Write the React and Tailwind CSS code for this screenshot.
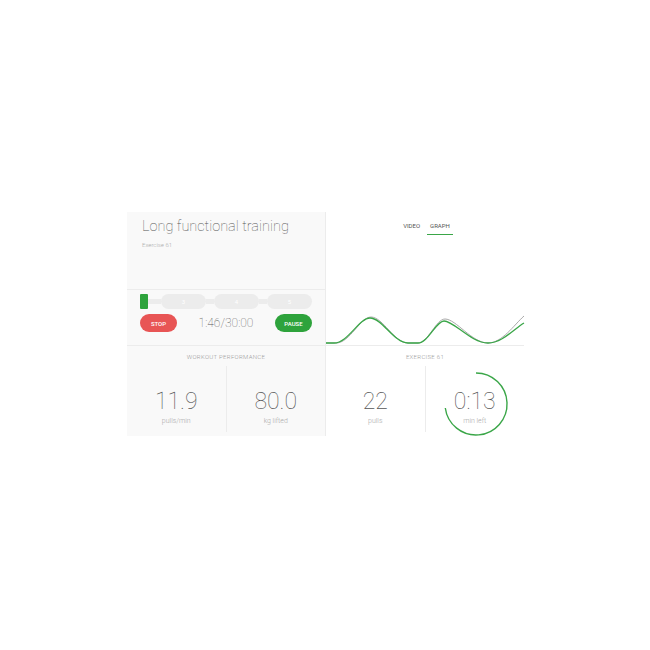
export default function App() {
  const steps = ["3", "4", "5"];

  return (
    <div className="w-[650px] h-[650px] bg-white font-['Roboto','Liberation_Sans',sans-serif] pt-[212px] pl-[127px]">
      <div className="flex w-[397px] h-[224px]">
        {/* Left panel */}
        <div className="w-[198px] flex flex-col bg-[#f9f9f9]">
          <div className="h-[78px] px-[15px] pt-[5px] border-b border-[#ececec]">
            <h1 className="text-[14.5px] font-thin text-[#555] leading-[20px]">Long functional training</h1>
            <p className="text-[6px] font-light text-[#aaa] mt-[3px]">Exercise 61</p>
          </div>

          <div className="h-[56px] px-[13px] pt-[4px] border-b border-[#ececec]">
            <div className="flex items-center h-[15px]">
              <div className="w-[10px] h-[15px] bg-[#2ea33c] rounded-[1px]" />
              {steps.map((s, i) => (
                <div key={s} className="flex items-center">
                  <div className={`h-[5px] bg-[#ececec] ${i === 0 ? "w-[13px]" : "w-[8px]"}`} />
                  <div className="w-[45px] h-[15px] rounded-full bg-[#ececec] flex items-center justify-center text-[6px] text-white">
                    {s}
                  </div>
                </div>
              ))}
            </div>
            <div className="flex items-center justify-between mt-[5px]">
              <button className="w-[37px] h-[18px] rounded-full bg-[#e85555] text-white text-[6px] font-medium">STOP</button>
              <span className="text-[12px] font-thin text-[#555]">1:46/30:00</span>
              <button className="w-[37px] h-[18px] rounded-full bg-[#2ea33c] text-white text-[6px] font-medium">PAUSE</button>
            </div>
          </div>

          <div className="flex-1 flex flex-col">
            <p className="h-[20px] flex items-center justify-center text-[6px] font-light tracking-[0.3px] text-[#999]">WORKOUT PERFORMANCE</p>
            <div className="flex h-[66px]">
              <Stat value="11.9" label="pulls/min" />
              <div className="w-px bg-[#ececec]" />
              <Stat value="80.0" label="kg lifted" />
            </div>
          </div>
        </div>

        {/* Right panel */}
        <div className="w-[199px] flex flex-col border-l border-[#ececec] bg-white">
          <div className="h-[134px] flex flex-col border-b border-[#ececec]">
            <div className="flex justify-center gap-[7px] pt-[9px] pl-[6px] text-[6px] text-[#555]">
              <span className="pb-[4px]">VIDEO</span>
              <span className="pb-[4px] px-[3px] border-b border-[#3aa648]">GRAPH</span>
            </div>
            <svg className="mt-auto" width="199" height="32" viewBox="0 0 199 32" fill="none">
              <path
                d="M0 30 L10 30 C24 30 34 4 45 4 C57 4 68 30 82 30 L92 30 C102 30 110 6 119 6 C130 6 146 30 162 30 C176 30 188 12 198 3"
                stroke="#a9a9a9"
                strokeWidth="1"
              />
              <path
                d="M0 30 L8 30 C22 30 33 5 44 5 C56 5 68 30 82 30 L92 30 C102 30 110 8 118 8 C128 8 145 30 162 30 C176 30 188 16 198 10"
                stroke="#3aa648"
                strokeWidth="1.3"
              />
            </svg>
          </div>
          <div className="flex-1 flex flex-col">
            <p className="h-[20px] flex items-center justify-center text-[6px] font-light tracking-[0.3px] text-[#999]">EXERCISE 61</p>
            <div className="flex h-[66px]">
              <Stat value="22" label="pulls" />
              <div className="w-px bg-[#ececec]" />
              <div className="flex-1 relative flex flex-col items-center pt-[24px]">
                <svg className="absolute left-[17px] top-[5px]" width="66" height="66" viewBox="0 0 66 66" fill="none">
                  <path d="M33 2 A31 31 0 1 1 2.3 37" stroke="#3aa648" strokeWidth="1.4" />
                </svg>
                <span className="text-[23px] font-thin text-[#555] leading-[24px]">0:13</span>
                <span className="text-[7px] font-light text-[#aaa] mt-[2px]">min left</span>
              </div>
            </div>
          </div>
        </div>
      </div>
    </div>
  );
}

function Stat({ value, label }) {
  return (
    <div className="flex-1 flex flex-col items-center pt-[24px]">
      <span className="text-[23px] font-thin text-[#555] leading-[24px]">{value}</span>
      <span className="text-[7px] font-light text-[#aaa] mt-[2px]">{label}</span>
    </div>
  );
}
